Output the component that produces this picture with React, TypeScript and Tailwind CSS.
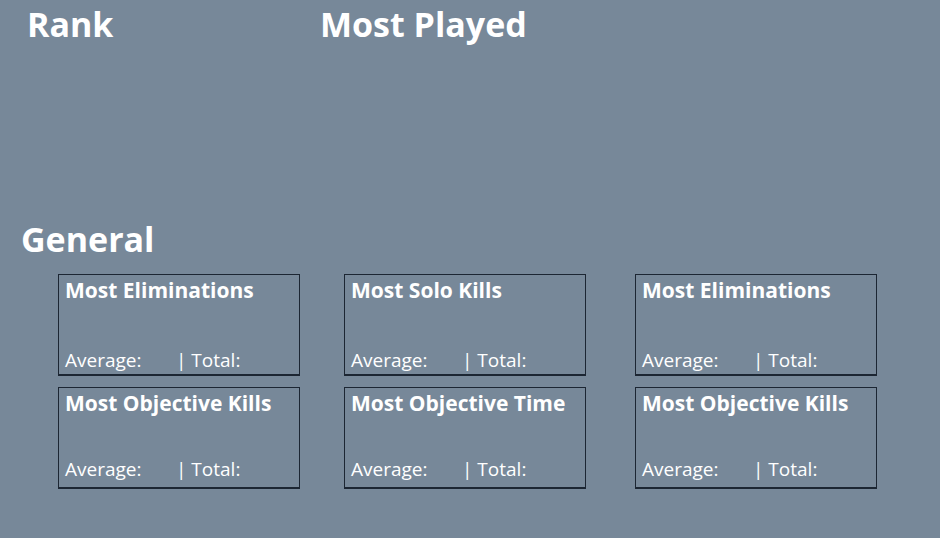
const cards = [
  { title: "Most Eliminations", ml: "ml-[58px]" },
  { title: "Most Solo Kills", ml: "ml-[44px]" },
  { title: "Most Eliminations", ml: "ml-[49px]" },
  { title: "Most Objective Kills", ml: "ml-[58px]" },
  { title: "Most Objective Time", ml: "ml-[44px]" },
  { title: "Most Objective Kills", ml: "ml-[49px]" },
];

const StatCard = ({ title, ml, pb }: { title: string; ml: string; pb: string }) => (
  <div
    className={`${ml} ${pb} flex h-[102px] w-[242px] flex-col justify-between border border-b-2 border-[#1c2633] px-[6px]`}>
    <h3 className="text-[21px] leading-[30px] font-bold">{title}</h3>
    <p className="flex text-[19px] leading-[26px]">
      <span className="w-[111px]">Average:</span>
      <span>| Total:</span>
    </p>
  </div>
);

export default function App() {
  return (
    <div
      className="h-[538px] w-[940px] bg-[#778899] text-white"
      style={{ fontFamily: '"Open Sans", "Noto Sans", sans-serif' }}>
      <div className="flex pt-[1px]">
        <h1 className="w-[320px] pl-[27px] text-[34px] leading-[46px] font-bold">Rank</h1>
        <h1 className="text-[34px] leading-[46px] font-bold">Most Played</h1>
      </div>
      <h2 className="mt-[169px] pl-[21px] text-[34px] leading-[46px] font-bold">General</h2>
      <div className="mt-[12px] flex flex-col gap-[11px]">
        <div className="flex">
          {cards.slice(0, 3).map((c, i) => (
            <StatCard key={i} {...c} pb="pb-[1px]" />
          ))}
        </div>
        <div className="flex">
          {cards.slice(3).map((c, i) => (
            <StatCard key={i} {...c} pb="pb-[5px]" />
          ))}
        </div>
      </div>
    </div>
  );
}
